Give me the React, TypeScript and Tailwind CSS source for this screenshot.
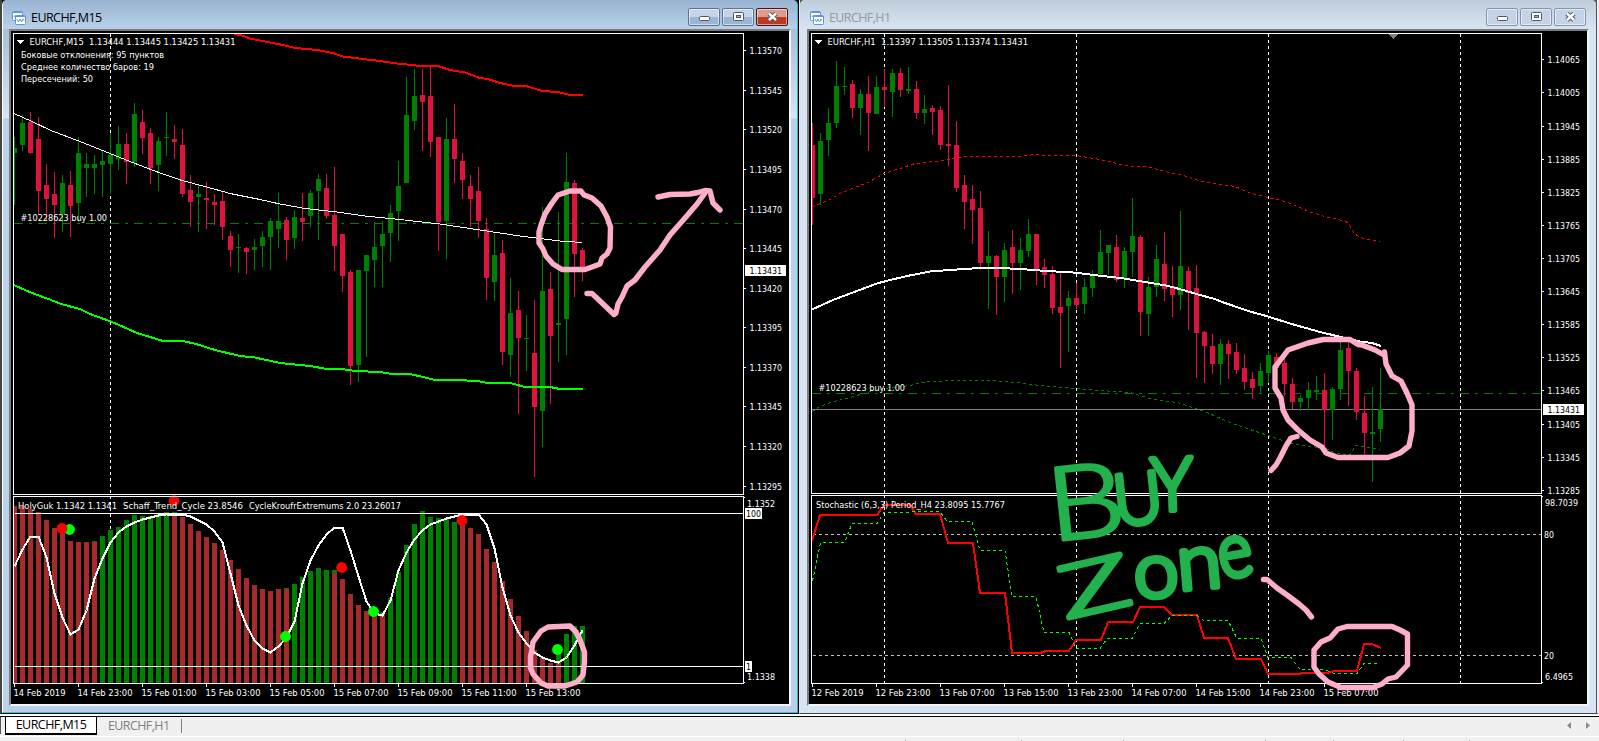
import type { ReactNode } from "react";

type Candle = [string, number, number, number, number];

const UP = "#008000";
const DOWN = "#dc143c";

// [direction, high, low, body top, body bottom]
const m15Candles: Candle[] = [
  ["u", 137, 205, 148, 153], ["u", 115, 151, 123, 145], ["d", 112, 154, 122, 153], ["d", 117, 214, 139, 191],
  ["d", 164, 221, 185, 199], ["d", 172, 238, 194, 205], ["u", 175, 232, 183, 214], ["d", 171, 237, 185, 206],
  ["u", 137, 222, 153, 203], ["u", 153, 197, 164, 168], ["u", 155, 194, 164, 168], ["u", 151, 197, 161, 165],
  ["u", 133, 194, 155, 164], ["u", 126, 170, 144, 159], ["d", 133, 184, 144, 162], ["u", 103, 167, 114, 162],
  ["d", 110, 154, 122, 138], ["d", 128, 184, 133, 168], ["u", 137, 191, 141, 165], ["u", 112, 156, 137, 138],
  ["d", 125, 159, 139, 142], ["d", 129, 197, 145, 194], ["d", 175, 227, 190, 202], ["u", 185, 232, 194, 197],
  ["d", 182, 229, 198, 200], ["d", 194, 225, 202, 205], ["d", 191, 240, 201, 227], ["d", 231, 267, 236, 250],
  ["u", 234, 273, 247, 248], ["d", 247, 274, 248, 252], ["u", 239, 270, 247, 250], ["u", 231, 267, 237, 246],
  ["u", 218, 270, 221, 237], ["u", 193, 248, 221, 229], ["d", 217, 260, 220, 240], ["u", 210, 249, 217, 238],
  ["d", 193, 241, 218, 222], ["u", 190, 227, 193, 216], ["u", 174, 240, 179, 191], ["d", 174, 219, 188, 216],
  ["d", 167, 271, 215, 246], ["d", 234, 292, 234, 276], ["d", 270, 385, 272, 366], ["u", 270, 382, 270, 365],
  ["u", 255, 357, 255, 271], ["u", 222, 287, 247, 260], ["u", 221, 287, 234, 246], ["u", 205, 262, 213, 233],
  ["u", 161, 241, 186, 211], ["u", 77, 183, 115, 183], ["u", 69, 130, 96, 121], ["d", 69, 151, 95, 102],
  ["d", 67, 157, 96, 142], ["d", 137, 251, 137, 222], ["u", 118, 259, 139, 221], ["d", 104, 183, 139, 159],
  ["d", 153, 199, 161, 180], ["d", 175, 227, 186, 199], ["d", 167, 238, 191, 221], ["d", 218, 300, 229, 278],
  ["u", 234, 301, 255, 282], ["d", 240, 365, 253, 352], ["u", 278, 377, 313, 355], ["d", 291, 414, 310, 338],
  ["u", 315, 371, 338, 339], ["d", 300, 477, 353, 407], ["u", 207, 447, 291, 411], ["d", 272, 404, 289, 336],
  ["u", 212, 362, 323, 325], ["u", 153, 355, 182, 319], ["d", 180, 297, 183, 254], ["d", 248, 281, 250, 269],
];

const h1Candles: Candle[] = [
  ["d", 123, 225, 145, 198], ["u", 133, 205, 141, 194], ["u", 108, 156, 123, 140], ["u", 61, 128, 86, 123],
  ["u", 67, 95, 86, 87], ["d", 80, 118, 84, 108], ["u", 89, 135, 94, 108], ["d", 76, 151, 94, 113],
  ["u", 76, 114, 87, 114], ["d", 69, 107, 87, 90], ["u", 69, 117, 73, 92], ["d", 68, 97, 73, 90],
  ["u", 67, 94, 89, 91], ["d", 81, 119, 89, 113], ["u", 95, 124, 109, 113], ["d", 105, 135, 108, 112],
  ["d", 106, 150, 110, 145], ["d", 85, 166, 144, 146], ["d", 121, 192, 145, 188], ["d", 175, 229, 185, 202],
  ["d", 185, 244, 199, 210], ["d", 191, 270, 208, 263], ["u", 231, 309, 256, 263], ["d", 255, 315, 256, 277],
  ["u", 243, 302, 250, 277], ["d", 230, 294, 247, 263], ["u", 238, 290, 250, 263], ["u", 219, 257, 234, 251],
  ["d", 234, 285, 234, 270], ["d", 259, 288, 267, 275], ["d", 266, 314, 274, 308], ["d", 272, 368, 307, 313],
  ["u", 291, 352, 298, 306], ["d", 283, 309, 298, 305], ["u", 278, 314, 287, 304], ["u", 270, 297, 275, 288],
  ["u", 230, 277, 252, 274], ["u", 245, 275, 245, 253], ["d", 235, 282, 247, 280], ["u", 247, 288, 251, 279],
  ["u", 198, 277, 236, 252], ["d", 235, 336, 237, 312], ["u", 277, 336, 287, 314], ["u", 245, 297, 259, 287],
  ["d", 232, 301, 264, 289], ["d", 266, 317, 286, 295], ["u", 211, 310, 266, 295], ["d", 267, 330, 271, 293],
  ["d", 265, 378, 288, 333], ["d", 331, 383, 332, 346], ["d", 334, 374, 346, 364], ["u", 339, 385, 344, 364],
  ["d", 340, 379, 344, 354], ["d", 343, 374, 352, 370], ["d", 354, 390, 368, 382], ["d", 372, 399, 379, 388],
  ["u", 363, 393, 371, 386], ["u", 351, 383, 355, 373], ["d", 353, 370, 357, 368], ["d", 355, 396, 363, 384],
  ["d", 378, 409, 384, 402], ["u", 395, 411, 398, 402], ["u", 382, 410, 390, 398], ["u", 376, 400, 390, 392],
  ["d", 373, 446, 390, 410], ["u", 387, 440, 389, 410], ["u", 341, 400, 350, 389], ["d", 342, 406, 348, 371],
  ["d", 368, 420, 371, 412], ["d", 396, 455, 413, 433], ["u", 387, 482, 432, 434], ["u", 368, 442, 409, 429],
];

const barTops = [
  506, 506, 509, 512, 520, 528, 533, 541, 542, 542, 542, 536, 530, 527, 520, 515, 516, 516, 514, 512, 515, 517, 524, 531,
  537, 543, 550, 560, 569, 578, 585, 589, 591, 589, 589, 584, 577, 571, 568, 570, 573, 579, 594, 605, 611, 613, 614, 598,
  572, 545, 524, 511, 517, 518, 518, 522, 520, 528, 534, 549, 562, 581, 599, 616, 631, 650, 657, 663, 663, 634, 626, 626,
];

// index ranges of rising bars
const risingRanges = [[11, 19], [35, 39], [47, 55], [69, 71]];

// green tips where the colour turns: [index, top, bottom]
const barTips = [[10, 541, 542], [20, 512, 515], [34, 588, 589], [40, 570, 573], [46, 612, 614], [68, 653, 663]];

const schaff = [
  566, 549, 536, 536, 557, 593, 617, 634, 629, 610, 578, 558, 542, 532, 526, 522, 519, 517, 515, 514, 514, 514, 516, 520,
  524, 531, 542, 573, 605, 625, 640, 648, 652, 646, 637, 621, 583, 560, 545, 534, 527, 527, 550, 576, 601, 613, 615, 600,
  570, 552, 539, 530, 524, 521, 518, 516, 514, 514, 514, 524, 548, 587, 615, 632, 643, 652, 657, 660, 662, 657, 645, 630,
];

const cycleDots: [number, number, string][] = [
  [69.5, 529.5, "#00ff00"], [62, 528.5, "#ff0000"], [174, 500.5, "#ff0000"], [285.5, 636.5, "#00ff00"],
  [341.7, 567.5, "#ff0000"], [373.5, 611.5, "#00ff00"], [462, 520.5, "#ff0000"], [557.5, 649.5, "#00ff00"],
];

const m15Prices: [number, string][] = [
  [50.5, "1.13570"], [90.5, "1.13545"], [129.5, "1.13520"], [169.5, "1.13495"], [209.5, "1.13470"], [248.5, "1.13445"],
  [288.5, "1.13420"], [327.5, "1.13395"], [367.5, "1.13370"], [406.5, "1.13345"], [446.5, "1.13320"], [486.5, "1.13295"],
];

const h1Prices: [number, string][] = [
  [59.5, "1.14065"], [92.5, "1.14005"], [126.5, "1.13945"], [159.5, "1.13885"], [192.5, "1.13825"], [225.5, "1.13765"],
  [258.5, "1.13705"], [291.5, "1.13645"], [324.5, "1.13585"], [357.5, "1.13525"], [390.5, "1.13465"], [424.5, "1.13405"],
  [457.5, "1.13345"], [490.5, "1.13285"],
];

const m15Times = [
  "14 Feb 2019", "14 Feb 23:00", "15 Feb 01:00", "15 Feb 03:00", "15 Feb 05:00", "15 Feb 07:00", "15 Feb 09:00",
  "15 Feb 11:00", "15 Feb 13:00",
];

const h1Times = [
  "12 Feb 2019", "12 Feb 23:00", "13 Feb 07:00", "13 Feb 15:00", "13 Feb 23:00", "14 Feb 07:00", "14 Feb 15:00",
  "14 Feb 23:00", "15 Feb 07:00",
];

function Label({ x, y, w, fill = "#ffffff", children }: { x: number; y: number; w: number; fill?: string; children: string }) {
  return (
    <text x={x} y={y} textLength={w} lengthAdjust="spacingAndGlyphs" fill={fill} className="whitespace-pre">
      {children}
    </text>
  );
}

function Candles({ data, start }: { data: Candle[]; start: number }) {
  return (
    <g>
      {data.map(([dir, high, low, top, bottom], i) => {
        const x = start + i * 8;
        // the first candle is cut off by the plot's left edge
        const left = i === 0 ? x : x - 2;
        return (
          <g key={i} fill={dir === "u" ? UP : DOWN}>
            <rect x={x} y={high} width={1} height={low - high} />
            <rect x={left} y={top} width={x + 3 - left} height={Math.max(1, bottom - top)} />
          </g>
        );
      })}
    </g>
  );
}

function PriceAxis({ x, prices }: { x: number; prices: [number, string][] }) {
  return (
    <g>
      {prices.map(([y, text]) => (
        <g key={text}>
          <rect x={x + 1} y={y - 0.5} width={2} height={1} fill="#fff" />
          <Label x={x + 6.5} y={y + 3.5} w={32.5}>{text}</Label>
        </g>
      ))}
    </g>
  );
}

function TimeAxis({ x, times }: { x: number; times: string[] }) {
  return (
    <g>
      {times.map((text, i) => (
        <g key={text}>
          <rect x={x + i * 64} y={684} width={1} height={3} fill="#fff" />
          <Label x={x - 0.5 + i * 64} y={696} w={i === 0 ? 52 : 55}>{text}</Label>
        </g>
      ))}
    </g>
  );
}

function Frame({ x, split }: { x: number; split: number }) {
  return (
    <g fill="none" stroke="#fff">
      <rect x={x + 0.5} y={33.5} width={730} height={split - 33} />
      <rect x={x + 0.5} y={split + 2.5} width={730} height={683 - split - 2} />
      <path d={`M${x + 731} ${split + 3.5}h1M${x + 731} 682.5h1`} />
    </g>
  );
}

function ChartSvg({ x, children }: { x: number; children: ReactNode }) {
  return (
    <svg
      width={778}
      height={673}
      viewBox={`${x} 31 778 673`}
      shapeRendering="crispEdges"
      className="block bg-black font-['DejaVu_Sans_Condensed','DejaVu_Sans',sans-serif] text-[9.3px]"
    >
      {children}
    </svg>
  );
}

function M15Chart() {
  const isRising = (i: number) => risingRanges.some(([a, b]) => i >= a && i <= b);
  return (
    <ChartSvg x={11}>
      <path d="M110.5 34V494" stroke="#fff" strokeDasharray="3 3" />
      <path d="M110.5 496V683" stroke="#fff" strokeDasharray="3 3" />
      <path d="M14 223.5H743" stroke="#008000" strokeDasharray="9 6 3 6" />
      <Candles data={m15Candles} start={14} />
      <g fill="none">
        <polyline
          stroke="#ff0000"
          strokeWidth={2}
          points="234,34 241,35 250,38.5 270,42.5 283,45 295,48 317,50 333,53 343,56.5 363,59 380,61 400,64 414,65 420,66.5 438,66 450,70 465,72.5 480,78 488,79 500,83 512,85.5 526,86 542,91 558,92 570,95 583,95"
        />
        <polyline
          stroke="#fff"
          points="14,113.5 32,121.5 51,130.5 80,141.5 110,153.5 130,161.5 156,171.5 182,180.5 205,186.5 230,193.5 260,199.5 280,204 305,208.5 333,211.5 365,216 400,219.5 440,224 480,230 520,236 560,241 582,242.5"
        />
        <polyline
          stroke="#00ff00"
          strokeWidth={2}
          points="14,285 27,291 47,298.5 63,304.5 80,309 90,314 111,321.5 137,333 163,341 183,341 196,344 215,350 240,356 255,357.5 280,363 310,366 327,369 342,369 355,371 380,372 392,374 410,374 423,377 435,380 455,380 478,381 487,383 510,383 525,387 550,387 560,389 583,389"
        />
      </g>

      <g>
        {barTops.map((top, i) => (
          <rect
            key={i}
            x={i === 0 ? 14 : 12 + i * 8}
            y={top}
            width={i === 0 ? 3 : 5}
            height={683 - top}
            fill={isRising(i) ? "#008000" : "#a52a2a"}
          />
        ))}
        {barTips.map(([i, top, bottom]) => (
          <rect key={i} x={12 + i * 8} y={top} width={5} height={bottom - top} fill="#008000" />
        ))}
      </g>
      <path d="M15 513.5H743M15 666.5H743" stroke="#fff" />
      <polyline
        fill="none"
        stroke="#fff"
        strokeWidth={2}
        points={schaff.map((y, i) => `${14.5 + i * 8},${y + 0.5}`).join(" ")}
      />
      {cycleDots.map(([x, y, color]) => (
        <circle key={x} cx={x} cy={y} r={5.4} fill={color} shapeRendering="auto" />
      ))}

      <Frame x={13} split={494} />
      <path d="M17 40h7l-3.5 4.5z" fill="#fff" />
      <Label x={29.5} y={45} w={206}>{"EURCHF,M15  1.13444 1.13445 1.13425 1.13431"}</Label>
      <Label x={21} y={58} w={143}>Боковые отклонения: 95 пунктов</Label>
      <Label x={21} y={70} w={133}>Среднее количество баров: 19</Label>
      <Label x={21} y={82} w={72}>Пересечений: 50</Label>
      <Label x={20.5} y={221} w={86.5}>#10228623 buy 1.00</Label>
      <Label x={18} y={509} w={99}>HolyGuk 1.1342 1.1341</Label>
      <Label x={123} y={509} w={120}>Schaff_Trend_Cycle 23.8546</Label>
      <Label x={249} y={509} w={152}>CycleKroufrExtremums 2.0 23.26017</Label>

      <PriceAxis x={743} prices={m15Prices} />
      <rect x={745} y={265} width={41} height={11} fill="#fff" />
      <Label x={749.5} y={274} w={32.5} fill="#000">1.13431</Label>
      <Label x={747} y={507} w={28}>1.1352</Label>
      <rect x={745} y={508} width={17} height={11} fill="#fff" />
      <Label x={746} y={517} w={15} fill="#000">100</Label>
      <rect x={745} y={661} width={7} height={11} fill="#fff" />
      <Label x={746} y={670} w={5} fill="#000">1</Label>
      <Label x={747} y={680} w={28}>1.1338</Label>
      <TimeAxis x={14} times={m15Times} />

      <g
        fill="none"
        stroke="#ffaec9"
        strokeWidth={5.4}
        strokeLinecap="round"
        strokeLinejoin="round"
        shapeRendering="auto"
      >
        <path d="M581 191L570 191 558 195 552 203 545 214 541 225 539 232 539 243 543 249 546 256 553 264 562 269.5 585 269.5 592 267 600 264 602 258 607 254 610 248 610.5 227 607 217 601 206 592 198 584 195Z" />
        <path d="M587 293.5H592L600 301 614 314.5 616 313 618 304 622 297 627 286 635 280 645 267 660 250 670 235 685 218 697 204 705 193" />
        <path d="M658 197L670 194.5 690 194 698 192.5 705 190.5 710 191 713 203 720 210" />
        <path d="M570 626L548 627 541 631 533 642 531.5 652 530.5 656 530.5 668 533 674 541 683 548 686 565 686 577 682 583 675 584.5 662 584.5 652 580 640 576 632Z" />
      </g>
    </ChartSvg>
  );
}

function H1Chart() {
  return (
    <ChartSvg x={809}>
      {[884, 1076, 1268, 1460].map((x) => (
        <g key={x} stroke="#fff" strokeDasharray="3 3">
          <path d={`M${x + 0.5} 34V493`} />
          <path d={`M${x + 0.5} 495V683`} />
        </g>
      ))}
      <path d="M812 393.5H1541" stroke="#008000" strokeDasharray="9 6 3 6" />
      <path d="M812 409.5H1541" stroke="#808080" />
      <Candles data={h1Candles} start={812} />
      <g fill="none">
        <polyline
          stroke="#ff0000"
          strokeDasharray="3 3"
          points="812,207 820,203.5 830,199.5 840,193.5 855,187.5 870,181.5 884,173.5 900,168.5 915,163.5 935,161.5 965,156.5 1020,156.5 1035,154.5 1045,155.5 1076,155.5 1100,159.5 1130,166.5 1147,166.5 1165,171.5 1183,175.5 1202,181.5 1215,183.5 1235,186.5 1250,193 1268,197.5 1285,201.5 1300,207.5 1310,212 1325,216.5 1340,220 1346,221.5 1350,226 1355,234 1360,237.5 1372,240 1380,241.5"
        />
        <polyline
          stroke="#008000"
          strokeDasharray="3 3"
          points="812,411.5 820,406.5 830,402.5 850,397.5 867,392.5 884,388.5 910,385.5 927,381.5 963,380.5 993,380.5 1017,382.5 1040,385.5 1077,388.5 1100,390.5 1130,392.5 1153,399.5 1177,402.5 1202,410.5 1230,422.5 1250,429.5 1268,435.5 1285,441.5 1295,444.5 1310,446.5 1325,448 1335,453 1350,455 1353,450 1356,445.5 1362,446.5 1380,449.5"
        />
        <polyline
          stroke="#fff"
          strokeWidth={2}
          points="812,309.5 833,300 853,292.5 877,283.5 884,281.5 907,276 930,271.5 957,269.5 980,268 1000,268 1020,269 1047,271 1076,272.7 1100,275.7 1123,278.3 1147,282.3 1167,285.7 1183,290 1200,295 1213,298.5 1225,303 1250,311.5 1268,316.5 1290,323.5 1320,332 1345,338 1360,341.5 1372,343 1381,346"
        />
      </g>
      <path d="M1389 34h9l-4.5 5z" fill="#808080" />

      <path d="M813 534.5H1541M813 655.5H1541" stroke="#c0c0c0" strokeDasharray="3 3" />
      <g fill="none">
        <polyline
          stroke="#ff0000"
          strokeWidth={2}
          points="812,541 820,515 877,515 884,505 910,505 916,514 940,514 948,543 973,543 980,593 1005,593 1012,653 1040,653 1046,651 1069,651 1076,640 1101,640 1108,622 1133,622 1140,607 1164,607 1172,615 1197,615 1204,638 1228,638 1236,659 1261,659 1268,674 1300,674 1301,673 1327,673 1334,671 1357,671 1364,644 1372,644 1381,648"
        />
        <polyline
          stroke="#00ff00"
          strokeDasharray="3 3"
          points="812.5,581 820.5,542.5 844.5,542.5 852,523.5 877,523.5 884,512.5 908,512.5 916,511.5 940,511.5 947,521.5 972,521.5 980,550.5 1005,550.5 1012,596.5 1036,596.5 1044,632.5 1069,632.5 1076,648.5 1100,648.5 1107,638.5 1132,638.5 1140,623.5 1164,623.5 1172,615.5 1197,615.5 1204,620.5 1228,620.5 1237,638.5 1261,638.5 1268,657.5 1291,657.5 1300,669.5 1325,669.5 1334,673.5 1357,673.5 1364,663.5 1376,663.5 1380,664.5"
        />
      </g>

      <Frame x={811} split={493} />
      <path d="M815 40h7l-3.5 4.5z" fill="#fff" />
      <Label x={827.5} y={45} w={200.5}>{"EURCHF,H1  1.13397 1.13505 1.13374 1.13431"}</Label>
      <Label x={818.5} y={391} w={86.5}>#10228623 buy 1.00</Label>
      <Label x={816} y={508} w={189}>Stochastic (6,3,3) Period_H4 23.8095 15.7767</Label>

      <PriceAxis x={1541} prices={h1Prices} />
      <rect x={1543} y={404} width={41} height={11} fill="#fff" />
      <Label x={1547.5} y={413} w={32.5} fill="#000">1.13431</Label>
      <Label x={1545} y={506} w={33}>98.7039</Label>
      <Label x={1544} y={538} w={10}>80</Label>
      <Label x={1544} y={659} w={10}>20</Label>
      <Label x={1545} y={680} w={28}>6.4965</Label>
      <TimeAxis x={812} times={h1Times} />

      <g
        fill="#22b14c"
        stroke="#22b14c"
        strokeLinejoin="round"
        shapeRendering="auto"
        className="font-['Lato','Open_Sans',sans-serif] font-light"
      >
        <text transform="translate(1051 541) rotate(-6) scale(1.2 1)" fontSize="102" strokeWidth="3.5">B</text>
        <text transform="translate(1116 526) rotate(-6) scale(0.95 1)" fontSize="71" strokeWidth="5.5">U</text>
        <text transform="translate(1152 511) rotate(-2) scale(0.95 1)" fontSize="74" strokeWidth="5.5">Y</text>
        <text transform="translate(1066 619) rotate(-13) scale(1.62 1)" fontSize="73" strokeWidth="4.5">Z</text>
        <text transform="translate(1135 598) rotate(-3) scale(1.04 1)" fontSize="77" strokeWidth="6">o</text>
        <text transform="translate(1179 590) rotate(-5) scale(1.05 1)" fontSize="77" strokeWidth="6">n</text>
        <text transform="translate(1222 579) rotate(-10) scale(0.86 1)" fontSize="76" strokeWidth="6">e</text>
      </g>

      <g
        fill="none"
        stroke="#ffaec9"
        strokeWidth={5.4}
        strokeLinecap="round"
        strokeLinejoin="round"
        shapeRendering="auto"
      >
        <path d="M1384 355L1375 350 1362 345 1358 344.5 1350 339.5 1323 339.5 1308 343 1288 350 1282 358 1275 367 1275 388 1281 398 1283 410 1288 420 1298 430 1310 440 1322 447 1326 453 1338 457.5 1388 457.5 1400 453 1409 446 1412 431 1412 405 1407 393 1401 381 1392 376 1386 364 1384.5 352" />
        <path d="M1271 470.5L1276 465 1280 458 1286 446 1291 438 1297 436.5" />
        <path d="M1263.5 579.5H1267L1277 588 1287 595 1299 604 1306 610 1311.5 617" />
        <path d="M1378 626.5H1347L1338 629 1330 638 1321 642 1314 650 1314 667 1319 674 1328 682 1341 687.5 1373 687.5 1382 684 1388 679 1396 677 1407.5 665 1407.5 634 1400 630 1392 626.5Z" />
      </g>
    </ChartSvg>
  );
}

function ChartIcon() {
  return (
    <svg width="15" height="15" viewBox="0 0 15 15" fill="#fff" stroke="#5c94e0">
      <rect x="0.5" y="0.5" width="10" height="9" rx="1" />
      <path d="M0.5 1.5h10M2 6l1.5-2 1.5 2" />
      <rect x="3.5" y="4.5" width="10" height="9" rx="1" />
      <path d="M3.5 5.5h10" />
      <path d="M5 8l1.5 3L8 8l1.5 3L11 8l1 1.5" fill="none" />
    </svg>
  );
}

function WindowButtons({ active }: { active: boolean }) {
  const base = "flex h-[18px] w-[32px] items-center justify-center rounded-[2px] border shadow-[inset_0_0_0_1px_rgba(255,255,255,0.5)]";
  const plain = active
    ? "border-[#5f7590] bg-linear-to-b from-[#c3d5e9] from-50% to-[#9cb5d0] to-50%"
    : "border-[#8796b0] bg-[#c4d3e6]";
  const close = active
    ? "border-[#431422] bg-linear-to-b from-[#dd9a8e] from-50% to-[#b93b24] to-50%"
    : plain;
  return (
    <div className="flex gap-0.5 pt-2">
      <div className={`${base} ${plain}`}>
        <svg width="11" height="9" viewBox="0 0 11 9">
          <rect x="0.5" y="3.5" width="10" height="4" rx="1" fill="#fff" stroke="#535666" />
        </svg>
      </div>
      <div className={`${base} ${plain}`}>
        <svg width="11" height="10" viewBox="0 0 11 10" fill="#fff" stroke="#535666">
          <rect x="0.5" y="0.5" width="10" height="8" rx="1" />
          <rect x="3.5" y="3.5" width="4" height="2" fill="#9cb5d0" />
        </svg>
      </div>
      <div className={`${base} ${close}`}>
        <svg width="13" height="10" viewBox="0 0 13 10" fill="none">
          <path d="M3 1.5l7 6.5M10 1.5L3 8" stroke="#535666" strokeWidth="4.5" />
          <path d="M3 1.5l7 6.5M10 1.5L3 8" stroke="#fff" strokeWidth="2.4" />
        </svg>
      </div>
    </div>
  );
}

function ChartBody({ children }: { children: ReactNode }) {
  return (
    <div className="border-2 border-t-[#7c7c7c] border-r-[#f4f4f4] border-b-[#f4f4f4] border-l-[#7c7c7c]">{children}</div>
  );
}

export default function App() {
  return (
    <div className="flex h-[741px] w-[1599px] flex-col overflow-hidden bg-[#f0f0f0] font-['Open_Sans','Noto_Sans',sans-serif]">
      <div className="flex h-[714px]">
        <section className="flex w-[799px] border-b border-l-2 border-b-black border-l-[#444] bg-black">
          <div className="flex flex-1 flex-col rounded-t-[5px] border-r border-b border-l border-r-[#2bb8dc] border-b-[#2bc4e4] border-l-white bg-linear-to-b from-[#99b4d1] via-[#d7e4f2] via-[118px] to-[#b9d1ea] to-[119px]">
            <div className="flex h-[29px] justify-between rounded-t-[5px] bg-linear-to-b from-[#99b4d1] to-[#b9d1ea] pr-[9px] pl-[9px]">
              <div className="flex items-center gap-1 pt-[7px]">
                <ChartIcon />
                <span className="text-[12.5px] tracking-[-0.55px] text-black">EURCHF,M15</span>
              </div>
              <WindowButtons active />
            </div>
            <div className="px-1.5">
              <ChartBody>
                <M15Chart />
              </ChartBody>
            </div>
          </div>
          <div className="w-px bg-black" />
        </section>

        <section className="flex w-[800px] border-r-2 border-b border-l border-r-[#f0f0f0] border-b-[#444] border-l-[#e4e8ee] bg-[#555]">
          <div className="flex flex-1 flex-col rounded-t-[5px] border-r border-r-[#4d5157] bg-[#d7e4f2]">
            <div className="flex h-[29px] justify-between rounded-t-[5px] bg-linear-to-b from-[#bfcddb] to-[#d7e4f2] pr-[10px] pl-[10px]">
              <div className="flex items-center gap-1 pt-[7px]">
                <ChartIcon />
                <span className="text-[12.5px] tracking-[-0.6px] text-[#999]">EURCHF,H1</span>
              </div>
              <WindowButtons active={false} />
            </div>
            <div className="px-[7px]">
              <ChartBody>
                <H1Chart />
              </ChartBody>
            </div>
          </div>
        </section>
      </div>

      <div className="h-[3px] border-b border-black bg-white" />
      <footer className="flex h-[20px] justify-between border-b border-white">
        <div className="flex">
          <div className="h-[17px] w-[5px] border-l border-[#555]" />
          <div className="flex h-[18px] w-[92px] items-center justify-center border-r border-b-2 border-l border-black bg-white pt-px text-[12.5px] tracking-[-0.55px] text-black">
            EURCHF,M15
          </div>
          <div className="flex h-[19px] w-[73px] items-center pl-[11px] text-[12.5px] tracking-[-0.6px] text-[#808080]">EURCHF,H1</div>
          <div className="mt-0.5 ml-[11px] h-[14px] w-px bg-[#808080]" />
        </div>
        <svg width="24" height="7" viewBox="0 0 24 7" fill="#8a8a8a" className="mt-[5px] mr-[8px]">
          <path d="M4 0v7L0 3.5zM19 0v7l4-3.5z" />
        </svg>
      </footer>
      <svg width="1599" height="4" viewBox="0 0 1599 4" fill="#a0a0a0" className="block">
        {[905, 1021, 1123, 1265, 1333, 1403, 1469].map((x) => (
          <rect key={x} x={x} y="3" width="1" height="1" />
        ))}
      </svg>
    </div>
  );
}
